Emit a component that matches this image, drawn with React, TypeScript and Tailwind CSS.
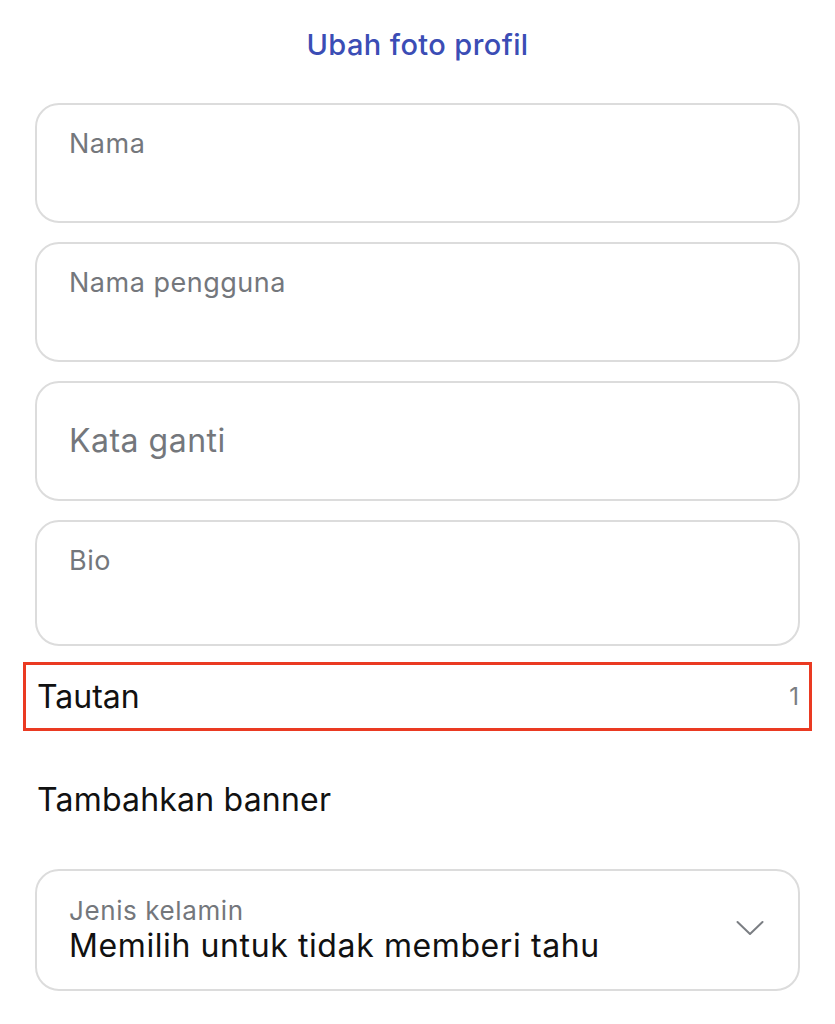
import { ReactNode } from 'react'

function Field({ label, height = 'h-[120px]' }: { label: string; height?: string }) {
  return (
    <div className={`${height} rounded-[24px] border-2 border-[#dcdcdc] pl-[32px] pt-[21px]`}>
      <span className="text-[27px] leading-[36px] tracking-[0.5px] text-[#74777c]">{label}</span>
    </div>
  )
}

function Row({ children, className }: { children: ReactNode; className?: string }) {
  return <div className={className}>{children}</div>
}

export default function App() {
  return (
    <div className="w-[835px] h-[1024px] bg-white px-[35px] font-['Inter',sans-serif]">
      <div className="pt-[26px] pb-[40px] text-center">
        <span className="text-[29px] leading-[37px] tracking-[0.4px] font-medium text-[#3b4db5]">
          Ubah foto profil
        </span>
      </div>

      <div className="flex flex-col gap-[19px]">
        <Field label="Nama" />
        <Field label="Nama pengguna" />
        <div className="h-[120px] rounded-[24px] border-2 border-[#dcdcdc] pl-[32px] flex items-center">
          <span className="text-[32px] tracking-[0.5px] text-[#74777c]">Kata ganti</span>
        </div>
        <Field label="Bio" height="h-[126px]" />
      </div>

      <Row className="-mx-[12px] mt-[16px] h-[69px] border-[3px] border-[#ea3a22] flex items-center justify-between pl-[11px] pr-[10px]">
        <span className="text-[32px] text-[#111]">Tautan</span>
        <span className="text-[24px] text-[#7a7d82]">1</span>
      </Row>

      <div className="h-[138px] flex items-center pl-[2px]">
        <span className="text-[32px] tracking-[0.2px] text-[#111]">Tambahkan banner</span>
      </div>

      <div className="h-[122px] rounded-[24px] border-2 border-[#dcdcdc] pl-[32px] pr-[34px] flex items-center justify-between">
        <div className="flex flex-col pt-[2px]">
          <span className="text-[26px] leading-[30px] tracking-[0.6px] text-[#74777c]">Jenis kelamin</span>
          <span className="text-[32px] leading-[40px] tracking-[0.6px] text-[#111]">Memilih untuk tidak memberi tahu</span>
        </div>
        <svg width="28" height="16" viewBox="0 0 28 16" fill="none" className="mb-[4px]">
          <path d="M1.5 2 L14 14 L26.5 2" stroke="#7b7e83" strokeWidth="2" strokeLinecap="round" strokeLinejoin="round" />
        </svg>
      </div>
    </div>
  )
}
